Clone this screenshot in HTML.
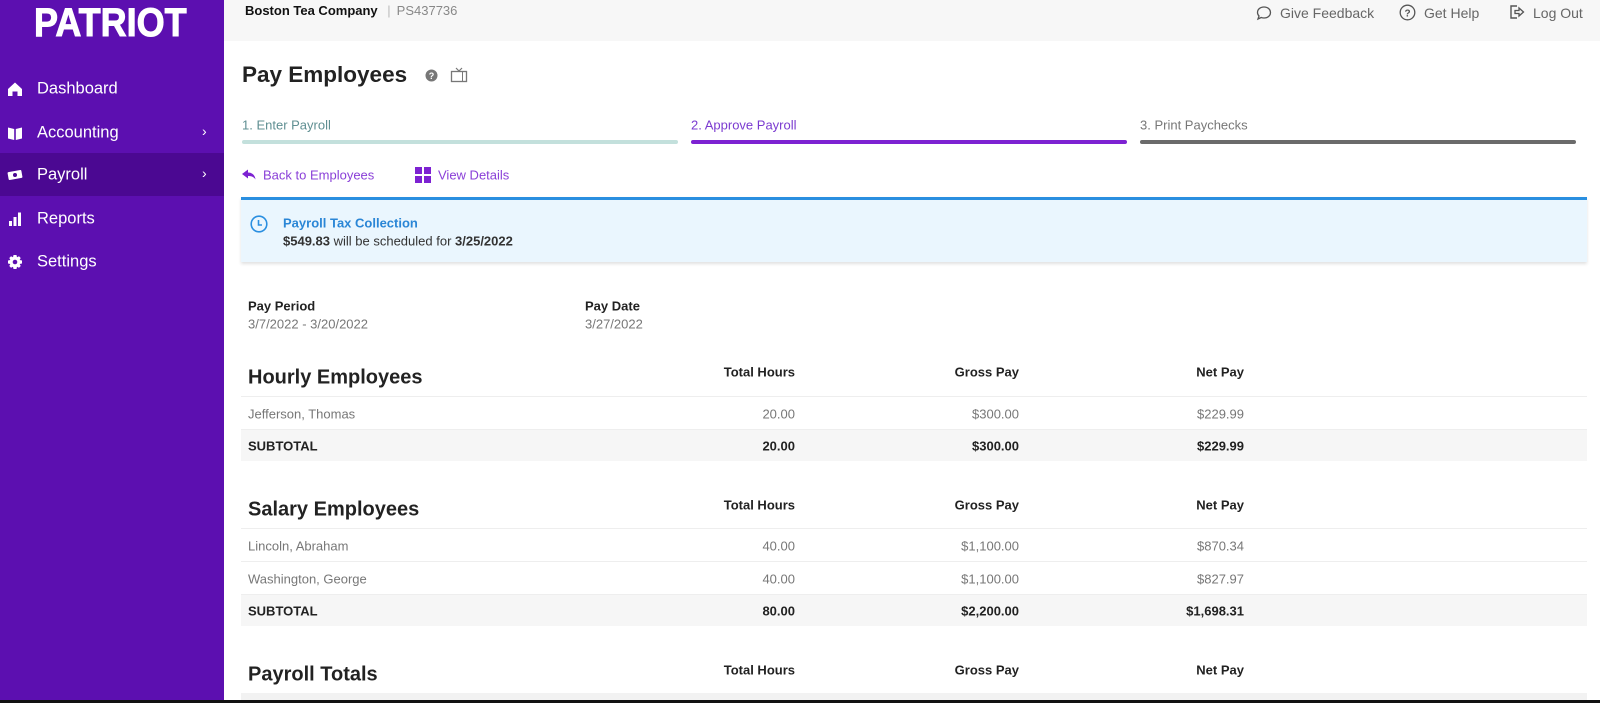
<!DOCTYPE html>
<html><head><meta charset="utf-8">
<style>
*{margin:0;padding:0;box-sizing:border-box}
html,body{width:1600px;height:703px;overflow:hidden;background:#fff;font-family:"Liberation Sans",sans-serif;color:#222}
.abs{position:absolute;white-space:nowrap}
#side{position:absolute;left:0;top:0;width:224px;height:700px;background:#5c0fb0}
#bottom{position:absolute;left:0;top:700px;width:1600px;height:3px;background:#111}
.logo{left:34px;top:3px;font-size:40px;line-height:1;font-weight:900;color:#fff;transform:scaleX(0.9);transform-origin:left;-webkit-text-stroke:1px #fff}
.nav{left:37px;font-size:16.5px;color:#fff;transform:translateY(-50%)}
.ico{position:absolute;left:7px;transform:translateY(-50%)}
.chev{left:202px;color:#fff;font-size:14px;transform:translateY(-50%)}
#hdr{position:absolute;left:224px;top:0;width:1376px;height:41px;background:#f7f7f7}
.mid{transform:translateY(-50%)}
.g{color:#777}
.r{text-align:right}
.th{font-size:13px;font-weight:bold;color:#222}
.td{font-size:13px;color:#777}
.tb{font-size:13px;font-weight:bold;color:#222}
.h2{font-size:20px;font-weight:bold;color:#222}
</style></head><body>
<div id="side"></div>
<div class="abs logo">PATRIOT</div>
<div style="position:absolute;left:0;top:153px;width:224px;height:43px;background:#4b0892"></div>

<svg class="ico" style="top:89px" width="16" height="16" viewBox="0 0 16 16"><path d="M1 8 L8 1.5 L15 8 V15 H10.5 V10.5 H5.5 V15 H1 Z" fill="#fff"/></svg>
<div class="abs nav" style="top:89px">Dashboard</div>
<svg class="ico" style="top:133px" width="16" height="16" viewBox="0 0 16 16"><path d="M1 2.5 L7.2 4 V15 L1 13.5Z M8.8 4 L15 2.5 V13.5 L8.8 15Z" fill="#fff"/></svg>
<div class="abs nav" style="top:133px">Accounting</div>
<div class="abs chev" style="top:131px">&#8250;</div>
<svg class="ico" style="top:175px" width="17" height="14" viewBox="0 0 17 14"><rect x="1" y="3" width="14" height="8" rx="1" fill="#fff" transform="rotate(-10 8 7)"/><circle cx="8" cy="7" r="2" fill="#4b0892"/></svg>
<div class="abs nav" style="top:175px">Payroll</div>
<div class="abs chev" style="top:173px">&#8250;</div>
<svg class="ico" style="top:219px" width="16" height="16" viewBox="0 0 16 16"><rect x="2" y="10" width="3" height="5" fill="#fff"/><rect x="6.5" y="6" width="3" height="9" fill="#fff"/><rect x="11" y="1.5" width="3" height="13.5" fill="#fff"/></svg>
<div class="abs nav" style="top:219px">Reports</div>
<svg class="ico" style="top:262px" width="16" height="16" viewBox="0 0 16 16"><path d="M8 1 L9.5 1 L10 3.3 L12 2.3 L13.7 4 L12.7 6 L15 6.5 V9.5 L12.7 10 L13.7 12 L12 13.7 L10 12.7 L9.5 15 H6.5 L6 12.7 L4 13.7 L2.3 12 L3.3 10 L1 9.5 V6.5 L3.3 6 L2.3 4 L4 2.3 L6 3.3 L6.5 1Z" fill="#fff"/><circle cx="8" cy="8" r="2.3" fill="#5c0fb0"/></svg>
<div class="abs nav" style="top:262px">Settings</div>

<div id="hdr"></div>
<div class="abs" style="left:245px;top:3px;font-size:13px;font-weight:bold;color:#111">Boston Tea Company <span style="font-weight:normal;color:#bbb;margin:0 6px">|</span><span style="font-weight:normal;color:#888">PS437736</span></div>
<svg class="abs" style="left:1256px;top:5px" width="16" height="16" viewBox="0 0 16 16"><path d="M8 2 C12 2 14.5 4.5 14.5 7.5 C14.5 10.5 12 13 8 13 C7 13 6 12.8 5.2 12.5 L2 14 L3 11 C2 10 1.5 8.8 1.5 7.5 C1.5 4.5 4 2 8 2Z" fill="none" stroke="#555" stroke-width="1.3"/></svg>
<div class="abs g" style="left:1280px;top:5px;font-size:14px;color:#666">Give Feedback</div>
<svg class="abs" style="left:1399px;top:4px" width="17" height="17" viewBox="0 0 17 17"><circle cx="8.5" cy="8.5" r="7.3" fill="none" stroke="#555" stroke-width="1.3"/><text x="8.5" y="12.5" font-size="10" text-anchor="middle" fill="#555" font-family="Liberation Sans" font-weight="bold">?</text></svg>
<div class="abs" style="left:1424px;top:5px;font-size:14px;color:#666">Get Help</div>
<svg class="abs" style="left:1509px;top:4px" width="17" height="16" viewBox="0 0 17 16"><path d="M8 2 H2 V14 H8" fill="none" stroke="#555" stroke-width="1.4"/><path d="M6 6.5 H10 V4 L14.5 8 L10 12 V9.5 H6Z" fill="none" stroke="#555" stroke-width="1.3"/></svg>
<div class="abs" style="left:1533px;top:5px;font-size:14px;color:#666">Log Out</div>

<div class="abs mid" style="left:242px;top:75px;font-size:22.5px;font-weight:bold;color:#222">Pay Employees</div>
<svg class="abs" style="left:425px;top:69px" width="13" height="13" viewBox="0 0 13 13"><circle cx="6.5" cy="6.5" r="6" fill="#777"/><text x="6.5" y="10" font-size="9" text-anchor="middle" fill="#fff" font-weight="bold" font-family="Liberation Sans">?</text></svg>
<svg class="abs" style="left:450px;top:67px" width="18" height="16" viewBox="0 0 18 16"><path d="M6 1 L9 4 L12 1" fill="none" stroke="#777" stroke-width="1.2"/><rect x="1.5" y="4.5" width="15" height="10" fill="none" stroke="#777" stroke-width="1.3"/><line x1="12.5" y1="5" x2="12.5" y2="14" stroke="#777"/></svg>

<div class="abs mid" style="left:242px;top:125px;font-size:13px;color:#5f8f92">1. Enter Payroll</div>
<div class="abs mid" style="left:691px;top:125px;font-size:13px;color:#7b3bd0">2. Approve Payroll</div>
<div class="abs mid" style="left:1140px;top:125px;font-size:13px;color:#777">3. Print Paychecks</div>
<div class="abs" style="left:242px;top:140px;width:436px;height:4px;border-radius:2px;background:#c3e0dc"></div>
<div class="abs" style="left:691px;top:140px;width:436px;height:4px;border-radius:2px;background:#7d22d2"></div>
<div class="abs" style="left:1140px;top:140px;width:436px;height:4px;border-radius:2px;background:#6b6b6b"></div>

<svg class="abs" style="left:242px;top:169px" width="14" height="11" viewBox="0 0 14 11"><path d="M0 5 L6 0.5 V3.5 C10 3.5 13 6 13.5 10.5 C11.5 7.5 9 7 6 7 V9.5Z" fill="#7d22d2"/></svg>
<div class="abs mid" style="left:263px;top:175px;font-size:13px;color:#8a3fd8">Back to Employees</div>
<svg class="abs" style="left:415px;top:167px" width="16" height="16" viewBox="0 0 16 16"><rect x="0" y="0" width="7" height="7" fill="#7d22d2"/><rect x="9" y="0" width="7" height="7" fill="#7d22d2"/><rect x="0" y="9" width="7" height="7" fill="#7d22d2"/><rect x="9" y="9" width="7" height="7" fill="#7d22d2"/></svg>
<div class="abs mid" style="left:438px;top:175px;font-size:13px;color:#8a3fd8">View Details</div>

<div class="abs" style="left:241px;top:197px;width:1346px;height:65px;background:#eaf6fe;border-top:3px solid #2a8fe0;box-shadow:0 2px 3px rgba(0,0,0,0.12)"></div>
<svg class="abs" style="left:250px;top:215px" width="18" height="18" viewBox="0 0 18 18"><circle cx="9" cy="9" r="7.8" fill="none" stroke="#2a8fe0" stroke-width="1.6"/><path d="M8.5 5 V10 H12" fill="none" stroke="#2a8fe0" stroke-width="1.6"/></svg>
<div class="abs mid" style="left:283px;top:223px;font-size:13px;font-weight:bold;color:#2a86d6">Payroll Tax Collection</div>
<div class="abs mid" style="left:283px;top:241px;font-size:13px;color:#333"><b>$549.83</b> will be scheduled for <b>3/25/2022</b></div>

<div class="abs mid th" style="left:248px;top:306px">Pay Period</div>
<div class="abs mid td" style="left:248px;top:324px">3/7/2022 - 3/20/2022</div>
<div class="abs mid th" style="left:585px;top:306px">Pay Date</div>
<div class="abs mid td" style="left:585px;top:324px">3/27/2022</div>

<div class="abs mid h2" style="left:248px;top:378px">Hourly Employees</div>
<div class="abs mid th r" style="right:805px;top:372px">Total Hours</div>
<div class="abs mid th r" style="right:581px;top:372px">Gross Pay</div>
<div class="abs mid th r" style="right:356px;top:372px">Net Pay</div>
<div class="abs" style="left:241px;top:396px;width:1346px;height:1px;background:#eee"></div>
<div class="abs mid td" style="left:248px;top:414px">Jefferson, Thomas</div>
<div class="abs mid td" style="right:805px;top:414px">20.00</div>
<div class="abs mid td" style="right:581px;top:414px">$300.00</div>
<div class="abs mid td" style="right:356px;top:414px">$229.99</div>
<div class="abs" style="left:241px;top:429px;width:1346px;height:32px;background:#f6f6f6;border-top:1px solid #eee"></div>
<div class="abs mid tb" style="left:248px;top:446px">SUBTOTAL</div>
<div class="abs mid tb" style="right:805px;top:446px">20.00</div>
<div class="abs mid tb" style="right:581px;top:446px">$300.00</div>
<div class="abs mid tb" style="right:356px;top:446px">$229.99</div>

<div class="abs mid h2" style="left:248px;top:510px">Salary Employees</div>
<div class="abs mid th" style="right:805px;top:505px">Total Hours</div>
<div class="abs mid th" style="right:581px;top:505px">Gross Pay</div>
<div class="abs mid th" style="right:356px;top:505px">Net Pay</div>
<div class="abs" style="left:241px;top:528px;width:1346px;height:1px;background:#eee"></div>
<div class="abs mid td" style="left:248px;top:546px">Lincoln, Abraham</div>
<div class="abs mid td" style="right:805px;top:546px">40.00</div>
<div class="abs mid td" style="right:581px;top:546px">$1,100.00</div>
<div class="abs mid td" style="right:356px;top:546px">$870.34</div>
<div class="abs" style="left:241px;top:561px;width:1346px;height:1px;background:#eee"></div>
<div class="abs mid td" style="left:248px;top:579px">Washington, George</div>
<div class="abs mid td" style="right:805px;top:579px">40.00</div>
<div class="abs mid td" style="right:581px;top:579px">$1,100.00</div>
<div class="abs mid td" style="right:356px;top:579px">$827.97</div>
<div class="abs" style="left:241px;top:594px;width:1346px;height:32px;background:#f6f6f6;border-top:1px solid #eee"></div>
<div class="abs mid tb" style="left:248px;top:611px">SUBTOTAL</div>
<div class="abs mid tb" style="right:805px;top:611px">80.00</div>
<div class="abs mid tb" style="right:581px;top:611px">$2,200.00</div>
<div class="abs mid tb" style="right:356px;top:611px">$1,698.31</div>

<div class="abs mid h2" style="left:248px;top:675px">Payroll Totals</div>
<div class="abs mid th" style="right:805px;top:670px">Total Hours</div>
<div class="abs mid th" style="right:581px;top:670px">Gross Pay</div>
<div class="abs mid th" style="right:356px;top:670px">Net Pay</div>
<div class="abs" style="left:241px;top:693px;width:1346px;height:7px;background:#f2f2f2"></div>

<div id="bottom"></div>
</body></html>
